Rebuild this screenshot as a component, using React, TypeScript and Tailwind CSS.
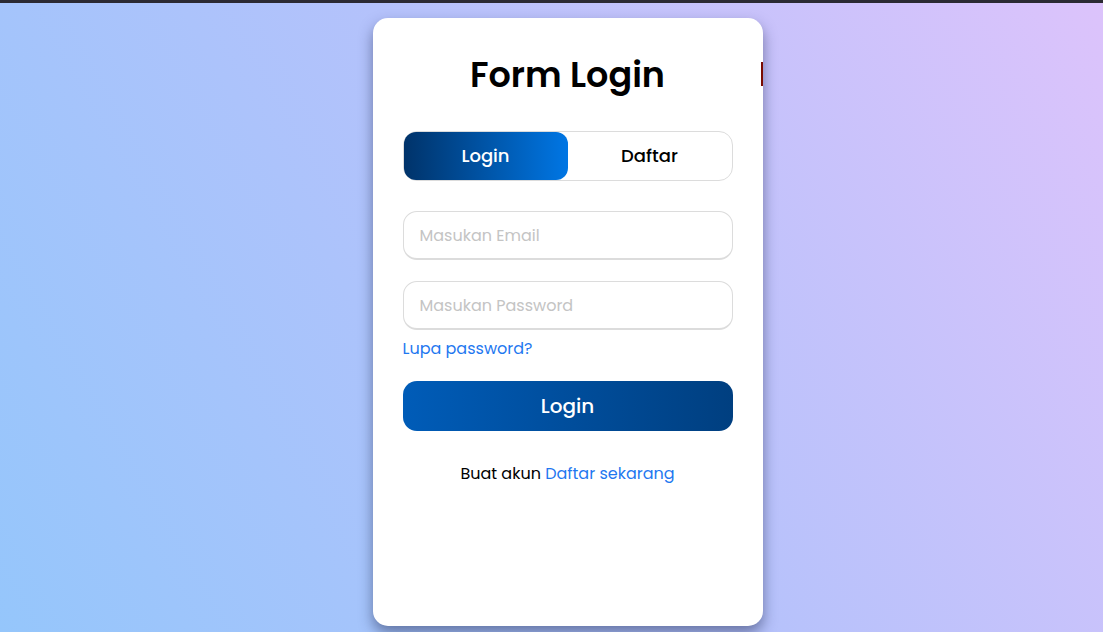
import React from "react";

export default function App() {
  const font = { fontFamily: "Poppins, Inter, 'Noto Sans', sans-serif" };
  return (
    <div className="w-full h-[632px] flex flex-col overflow-hidden" style={font}>
      <div className="h-[3px] bg-[#2b2a33] shrink-0" />
      <div className="flex-1 flex justify-center pl-[32px] bg-[linear-gradient(60deg,#95c6fb_0%,#b4c2fb_50%,#dcc3fb_100%)]">
        <div className="relative mt-[15px] w-[390px] h-[608px] bg-white rounded-[15px] shadow-[0_7px_14px_rgba(30,40,80,0.5)] pt-[31px] px-[30px] flex flex-col">
          <div className="absolute right-[0px] top-[44px] w-[2px] h-[24px] bg-[#7a0a00]" />
          <h1 className="text-center text-[35px] leading-[52px] font-semibold text-black">Form Login</h1>
          <div className="mt-[30px] h-[50px] border border-[#dcdcdc] rounded-[14px] flex">
            <button className="w-1/2 pb-[2px] rounded-[12px] bg-[linear-gradient(to_right,#00336a,#0076e4)] text-white text-[18px] font-medium">Login</button>
            <button className="w-1/2 pb-[2px] text-black text-[18px] font-medium">Daftar</button>
          </div>
          <input
            className="mt-[30px] h-[49px] w-full rounded-[14px] border border-b-2 border-[#dcdcdc] pl-4 text-[16px] outline-none placeholder:text-[#c4c4c4]"
            placeholder="Masukan Email"
          />
          <input
            className="mt-[21px] h-[49px] w-full rounded-[14px] border border-b-2 border-[#dcdcdc] pl-4 text-[16px] outline-none placeholder:text-[#c4c4c4]"
            placeholder="Masukan Password"
          />
          <a className="mt-[7px] leading-6 text-[16px] text-[#1f78f0] self-start">Lupa password?</a>
          <button className="mt-[20px] h-[50px] w-full rounded-[14px] bg-[linear-gradient(to_right,#005cb8,#003f80)] text-white text-[20px] font-medium">Login</button>
          <p className="mt-[31px] leading-6 text-center text-[16px] text-black">
            Buat akun <span className="text-[#1f78f0]">Daftar sekarang</span>
          </p>
        </div>
      </div>
    </div>
  );
}
